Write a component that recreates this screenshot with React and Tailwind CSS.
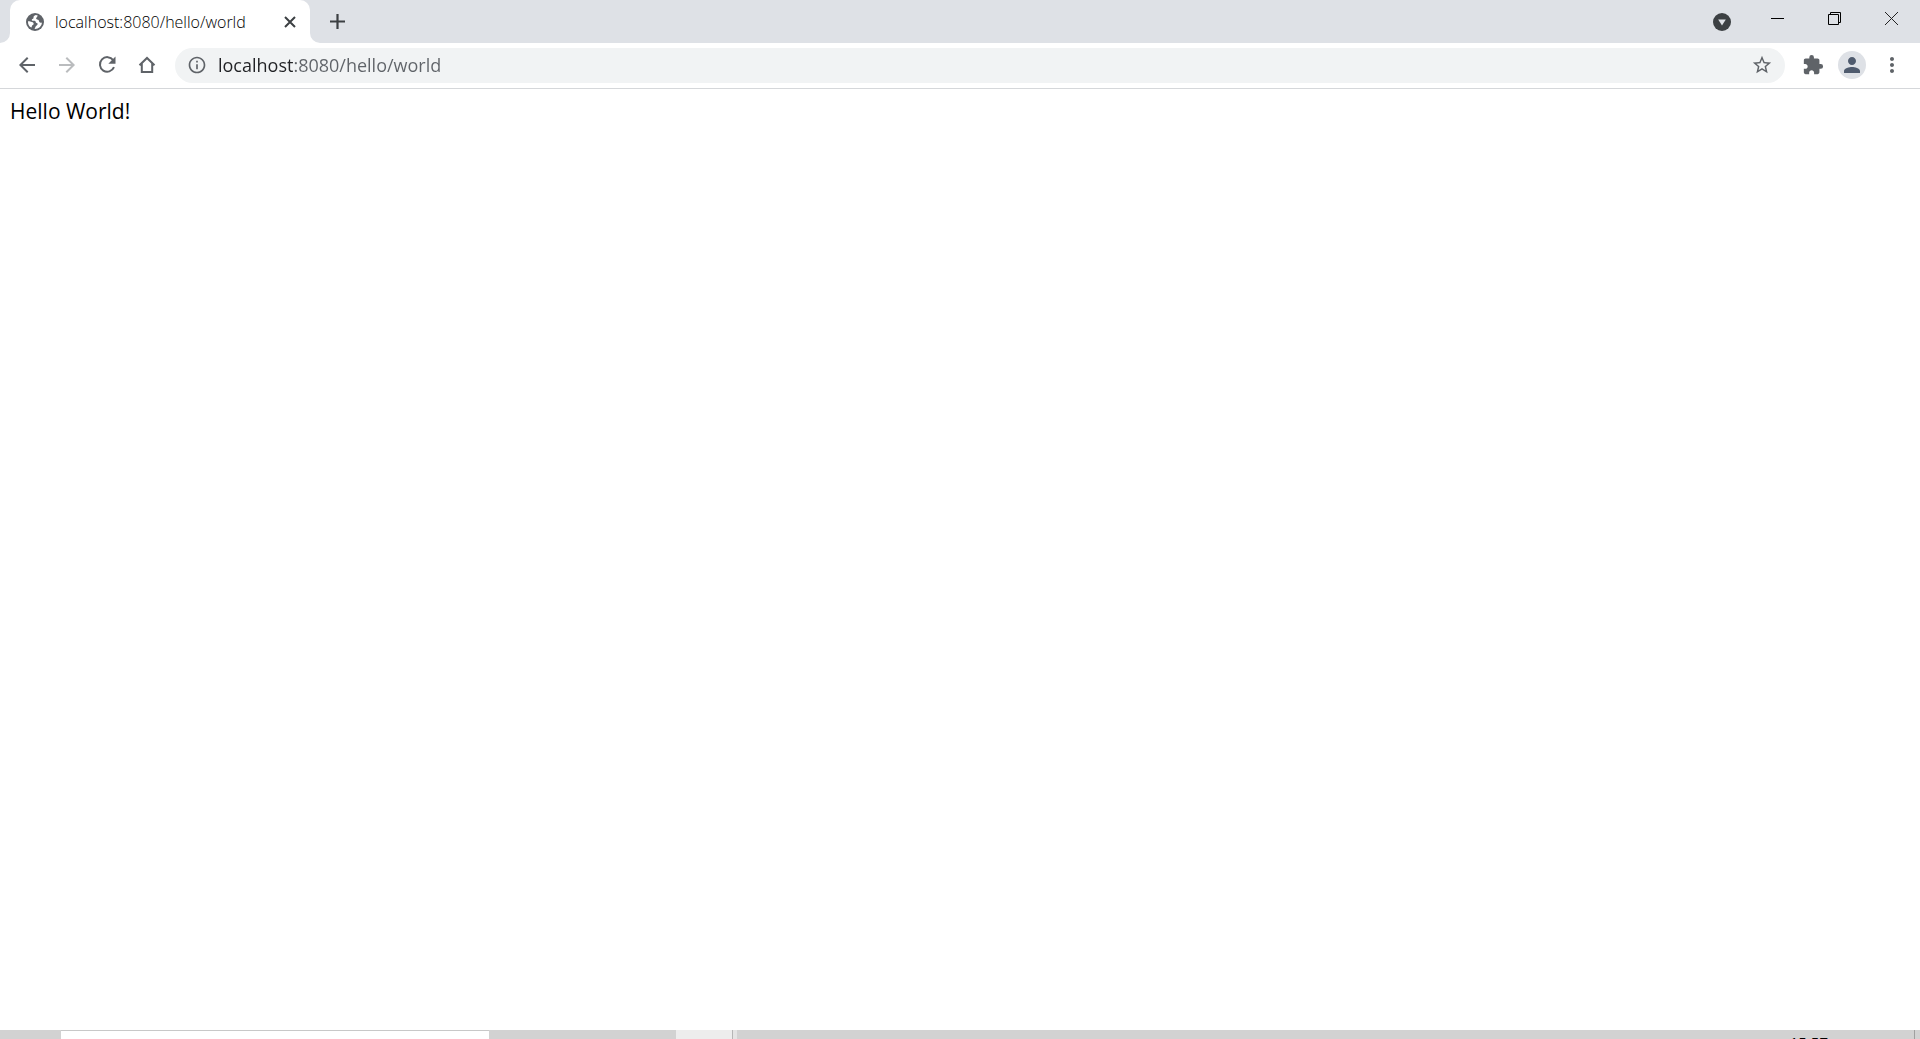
import { MdArrowBack, MdArrowForward, MdInfoOutline, MdStarBorder, MdExtension, MdPerson, MdMoreVert } from "react-icons/md";

const url = "localhost:8080/hello/world";

function Globe() {
  return (
    <svg viewBox="0 0 18 18" className="w-[18px] h-[18px] shrink-0">
      <circle cx="9" cy="9" r="9" fill="#5f6368" />
      <path
        d="M9.800 2C8.400 2.500 7.300 3.400 7.500 4.400c.1.700-.2 1.300-1 1.600-.9.300-1 1.500.1 1.700 1.200.2 2.200-.2 2.800.6.600.9.100 1.500 1.200 1.700 1 .2 1.300.9.800 1.700-.5.900-1.500.9-1.800 2-.2.800-1 1.300-.9 2.300A7 7 0 0 0 16 9.400c-1.200.5-2.400.2-2.800-.7-.4-.9-.2-1.500-1.200-1.900-1-.3-2-.5-1.900-1.500.1-.9 1.300-1 1.600-2.700A7 7 0 0 0 9.800 2zM2 8.200c1.500-.1 2.700.5 3.900.9 1.200.4 2.100 1.100 1.700 2.200-.4 1-1.700.8-1.800 2.100-.1.600-.3.900-.6 1.200A7 7 0 0 1 2 8.200z"
        fill="#fff"
      />
    </svg>
  );
}

function TabStrip() {
  return (
    <div className="flex h-[43px] bg-[#dee1e6] px-[10px]">
      {/* Active tab */}
      <div className="relative flex items-center w-[300px] rounded-t-[10px] bg-white pl-4 pr-[14px]">
        <svg viewBox="0 0 10 10" className="absolute -left-[10px] bottom-0 w-[10px] h-[10px]">
          <path d="M10 0v10H0A10 10 0 0 0 10 0z" fill="#fff" />
        </svg>
        <Globe />
        <span className="flex-1 ml-[11px] text-[16px] leading-5 font-light text-black">{url}</span>
        <button aria-label="Close tab" className="w-3 h-5 flex items-center justify-center">
          <svg viewBox="0 0 12 12" className="w-3 h-3">
            <path d="M1 1l10 10M11 1L1 11" stroke="#3c4043" strokeWidth="2" />
          </svg>
        </button>
        <svg viewBox="0 0 10 10" className="absolute -right-[10px] bottom-0 w-[10px] h-[10px]">
          <path d="M0 0v10h10A10 10 0 0 1 0 0z" fill="#fff" />
        </svg>
      </div>

      <button aria-label="New tab" className="ml-5 w-4 flex items-center">
        <svg viewBox="0 0 16 16" className="w-4 h-4">
          <path d="M7.500 0v15M0 7.500h15" stroke="#3c4043" strokeWidth="2.200" />
        </svg>
      </button>

      {/* Window controls */}
      <div className="flex ml-auto -mr-[10px]">
        <button aria-label="Search tabs" className="w-[34px] flex items-center justify-center">
          <svg viewBox="0 0 18 18" className="w-[18px] h-[18px]">
            <circle cx="9" cy="9" r="9" fill="#3c4043" />
            <path d="M5.200 6.500h7.600L9 12.500z" fill="#dee1e6" />
          </svg>
        </button>
        <div className="flex h-[37px] ml-[10px]">
          <button aria-label="Minimize" className="w-[57px] flex items-center justify-center">
            <svg viewBox="0 0 13 13" className="w-[13px] h-[13px]">
              <path d="M0 6.500h13" stroke="#000" />
            </svg>
          </button>
          <button aria-label="Restore" className="w-[56px] flex items-center justify-center">
            <svg viewBox="0 0 13 13" className="w-[13px] h-[13px]" fill="none" stroke="#000">
              <path d="M.5 2.500h10v10H.5zM2.500 2.500v-2h10v10h-2" />
            </svg>
          </button>
          <button aria-label="Close" className="w-[58px] flex items-center justify-center">
            <svg viewBox="0 0 13 13" className="w-[13px] h-[13px]">
              <path d="M0 0l13 13M13 0L0 13" stroke="#222" />
            </svg>
          </button>
        </div>
      </div>
    </div>
  );
}

function Toolbar() {
  return (
    <div className="flex items-center h-[46px] border-b border-[#d5d7da] bg-white pl-[15px] pr-4 pb-px text-[#5f6368]">
      <div className="flex gap-4">
        <button aria-label="Back"><MdArrowBack className="w-6 h-6" /></button>
        <button aria-label="Forward" className="text-[#babcbe]"><MdArrowForward className="w-6 h-6" /></button>
        <button aria-label="Reload">
          <svg viewBox="0 0 24 24" className="w-6 h-6">
            <path d="M18.200 7.200A7.300 7.300 0 1 0 19 14.200" fill="none" stroke="currentColor" strokeWidth="2" />
            <path d="M20.500 3.500v7.200h-7.200z" fill="currentColor" />
          </svg>
        </button>
        <button aria-label="Home">
          <svg viewBox="0 0 24 24" className="w-6 h-6">
            <path d="M4.500 12.200L12 5l7.500 7.200M6.800 10.500v8.500h10.400v-8.500" fill="none" stroke="currentColor" strokeWidth="2" />
          </svg>
        </button>
      </div>

      {/* Address bar */}
      <div className="flex flex-1 items-center h-[35px] ml-4 rounded-full bg-[#f1f3f4] px-3">
        <button aria-label="Site information"><MdInfoOutline className="w-5 h-5" /></button>
        <input
          aria-label="Address"
          defaultValue={url}
          className="flex-1 ml-[11px] text-[18px] leading-6 text-transparent bg-clip-text bg-[linear-gradient(to_right,#202124_76px,#5f6368_76px)] caret-black outline-none"
        />
        <button aria-label="Bookmark"><MdStarBorder className="w-[22px] h-[22px]" /></button>
      </div>

      <div className="flex items-center ml-[17px] gap-[14px]">
        <button aria-label="Extensions"><MdExtension className="w-[22px] h-[22px]" /></button>
        <button aria-label="Profile" className="w-7 h-7 rounded-full bg-[#dee1e6] flex items-center justify-center text-[#4f5b6e]">
          <MdPerson className="w-6 h-6" />
        </button>
        <button aria-label="Menu"><MdMoreVert className="w-6 h-6" /></button>
      </div>
    </div>
  );
}

function Taskbar() {
  return (
    <div className="flex h-[9px] overflow-hidden bg-[#d2d2d2]">
      <div className="w-[428px] ml-[61px] border-t border-[#c8c8c8] bg-white" />
      <div className="w-[56px] ml-[187px] bg-[#ededed]" />
      <div className="w-[5px] border-l border-[#b5b5b5] bg-[#e4e4e4]" />
      <time className="ml-auto mr-[86px] mt-[2px] text-[15px] leading-5 text-black">15:57</time>
      <div className="w-[6px] border-l border-[#a0a0a0]" />
    </div>
  );
}

export default function App() {
  return (
    <div className="flex flex-col h-screen bg-white font-['Open_Sans','Noto_Sans',sans-serif]">
      <TabStrip />
      <Toolbar />
      <main className="flex-1 px-[10px] py-2">
        <p className="text-[21px] leading-7 text-black">Hello World!</p>
      </main>
      <Taskbar />
    </div>
  );
}
